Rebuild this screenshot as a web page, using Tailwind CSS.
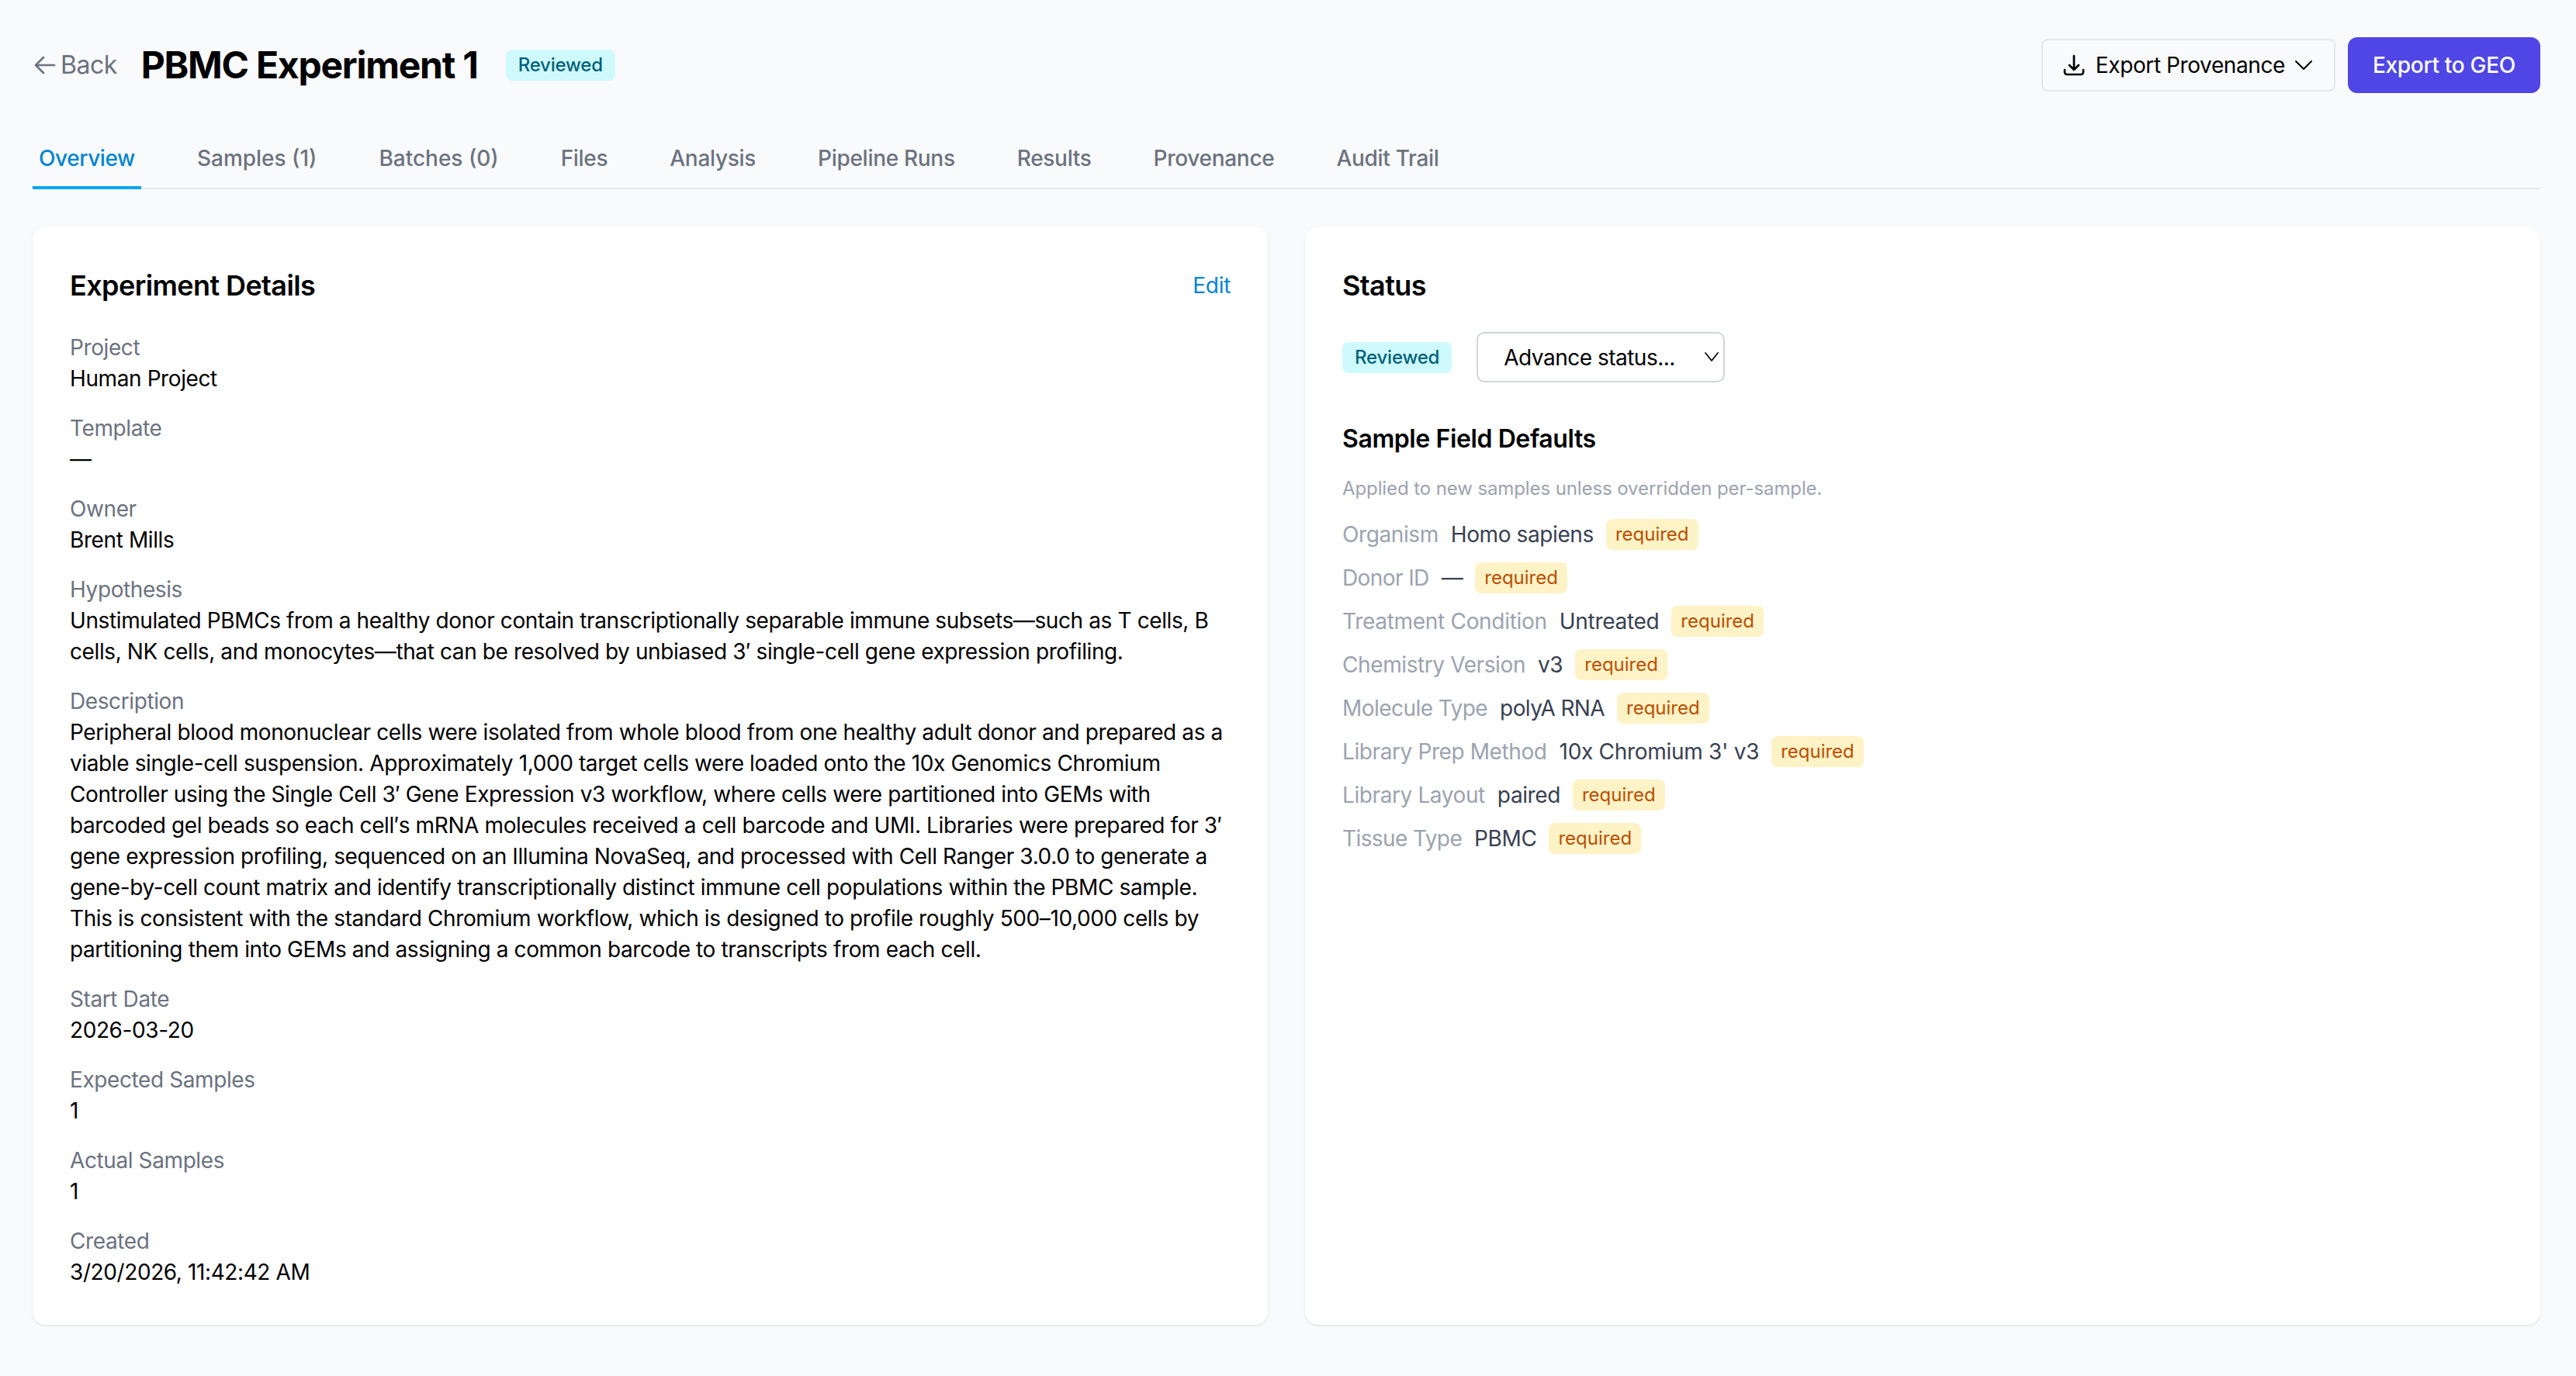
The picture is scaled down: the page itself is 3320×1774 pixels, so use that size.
<!DOCTYPE html>
<html lang="en">
<head>
  <meta charset="UTF-8" />
  <title>PBMC Experiment 1</title>
  <script src="https://cdn.jsdelivr.net/npm/@tailwindcss/browser@4"></script>
</head>
<body class="bg-[#f9fafb] min-h-screen font-['Inter',sans-serif] text-black text-[28px] leading-[40px] tracking-[-0.4px]">
  <div class="w-[3232px] ml-[42px]">
    <!-- Header -->
    <div class="flex items-center justify-between pt-[48px] h-[120px]">
      <div class="flex items-center">
        <a class="flex items-center gap-[4px] text-[32px] tracking-[-0.5px] text-[#6b7280]">
          <svg class="w-[32px] h-[32px]" fill="none" viewBox="0 0 24 24" stroke="currentColor" stroke-width="2" stroke-linecap="round" stroke-linejoin="round"><path d="M10.5 19.5 3 12m0 0 7.5-7.5M3 12h18" /></svg>
          Back
        </a>
        <h1 class="ml-[31px] text-[48px] leading-[64px] font-bold tracking-[-1.25px]">PBMC Experiment 1</h1>
        <span class="ml-[36px] bg-cyan-100 text-cyan-800 text-[24px] leading-[32px] tracking-[-0.2px] font-medium px-[16px] py-[4px] rounded-[8px]">Reviewed</span>
      </div>
      <div class="flex items-center gap-[16px]">
        <button class="flex items-center h-[68px] pl-[24px] pr-[23px] border-2 border-[#e5e7eb] rounded-[8px]">
          <svg class="w-[32px] h-[32px] mr-[12px]" fill="none" viewBox="0 0 24 24" stroke="currentColor" stroke-width="2" stroke-linecap="round" stroke-linejoin="round"><path d="M3 16.5v2.25A2.25 2.25 0 0 0 5.25 21h13.5A2.25 2.25 0 0 0 21 18.75V16.5M16.5 12 12 16.5m0 0L7.5 12m4.5 4.5V3" /></svg>
          Export Provenance
          <svg class="w-[32px] h-[32px] ml-[8px]" fill="none" viewBox="0 0 24 24" stroke="currentColor" stroke-width="1.5" stroke-linecap="round" stroke-linejoin="round"><path d="m19.5 8.25-7.5 7.5-7.5-7.5" /></svg>
        </button>
        <button class="h-[72px] px-[32px] bg-[#4f46e5] text-white font-medium tracking-[-0.3px] rounded-[12px]">Export to GEO</button>
      </div>
    </div>

    <!-- Tabs -->
    <div class="mt-[42px] flex gap-[64px] border-b-2 border-[#e5e7eb] h-[82px] text-[#6b7280] font-medium tracking-[-0.3px]">
      <a class="px-[8px] pt-[22px] h-[82px] border-b-4 border-sky-500 text-sky-600 tracking-[-0.4px]">Overview</a>
      <a class="px-[8px] pt-[22px] tracking-normal">Samples (1)</a>
      <a class="px-[8px] pt-[22px] tracking-normal">Batches (0)</a>
      <a class="px-[8px] pt-[22px]">Files</a>
      <a class="px-[8px] pt-[22px]">Analysis</a>
      <a class="px-[8px] pt-[22px]">Pipeline Runs</a>
      <a class="px-[8px] pt-[22px]">Results</a>
      <a class="px-[8px] pt-[22px]">Provenance</a>
      <a class="px-[8px] pt-[22px]">Audit Trail</a>
    </div>

    <div class="mt-[48px] grid grid-cols-2 gap-[48px]">
      <!-- Experiment details -->
      <div class="bg-white rounded-[16px] shadow-sm p-[48px] h-[1416px]">
        <div class="flex items-center justify-between h-[56px] mb-[32px]">
          <h2 class="text-[36px] leading-[56px] font-semibold tracking-[-0.6px]">Experiment Details</h2>
          <a class="text-sky-600 tracking-[-0.3px]">Edit</a>
        </div>
        <div class="flex flex-col gap-[24px]">
          <div><div class="text-[#6b7280]">Project</div><div>Human Project</div></div>
          <div><div class="text-[#6b7280]">Template</div><div>—</div></div>
          <div><div class="text-[#6b7280]">Owner</div><div>Brent Mills</div></div>
          <div>
            <div class="text-[#6b7280]">Hypothesis</div>
            <p class="tracking-[-0.39px]">Unstimulated PBMCs from a healthy donor contain transcriptionally separable immune subsets—such as T cells, B cells, NK cells, and monocytes—that can be resolved by unbiased 3′ single-cell gene expression profiling.</p>
          </div>
          <div>
            <div class="text-[#6b7280]">Description</div>
            <p class="tracking-[-0.39px]">Peripheral blood mononuclear cells were isolated from whole blood from one healthy adult donor and prepared as a viable single-cell suspension. Approximately 1,000 target cells were loaded onto the 10x Genomics Chromium Controller using the Single Cell 3′ Gene Expression v3 workflow, where cells were partitioned into GEMs with barcoded gel beads so each cell′s mRNA molecules received a cell barcode and UMI. Libraries were prepared for 3′ gene expression profiling, sequenced on an Illumina NovaSeq, and processed with Cell Ranger 3.0.0 to generate a gene-by-cell count matrix and identify transcriptionally distinct immune cell populations within the PBMC sample. This is consistent with the standard Chromium workflow, which is designed to profile roughly 500–10,000 cells by partitioning them into GEMs and assigning a common barcode to transcripts from each cell.</p>
          </div>
          <div><div class="text-[#6b7280]">Start Date</div><div>2026-03-20</div></div>
          <div><div class="text-[#6b7280]">Expected Samples</div><div>1</div></div>
          <div><div class="text-[#6b7280]">Actual Samples</div><div>1</div></div>
          <div><div class="text-[#6b7280]">Created</div><div>3/20/2026, 11:42:42 AM</div></div>
        </div>
      </div>

      <!-- Status -->
      <div class="bg-white rounded-[16px] shadow-sm p-[48px] h-[1416px]">
        <h2 class="text-[36px] leading-[56px] font-semibold tracking-[-0.6px]">Status</h2>
        <div class="mt-[32px] flex items-center gap-[32px] h-[65px]">
          <span class="bg-cyan-100 text-cyan-800 text-[24px] leading-[32px] tracking-[-0.2px] font-medium px-[16px] py-[4px] rounded-[8px]">Reviewed</span>
          <div class="relative">
            <select class="appearance-none w-[320px] h-[65px] pl-[33px] border-2 border-[#d1d5db] rounded-[10px] bg-white text-black tracking-[-0.5px]">
              <option>Advance status...</option>
            </select>
            <svg class="absolute right-[7px] top-[25px] w-[20px] h-[14px] pointer-events-none" fill="none" viewBox="0 0 20 14" stroke="currentColor" stroke-width="1.7" stroke-linecap="round" stroke-linejoin="round"><path d="M2 2l8 10 8-10" /></svg>
          </div>
        </div>
        <h3 class="mt-[49px] text-[32px] leading-[48px] font-semibold">Sample Field Defaults</h3>
        <p class="mt-[24px] text-[24px] leading-[32px] tracking-[-0.1px] text-[#9ca3af]">Applied to new samples unless overridden per-sample.</p>
        <div class="mt-[23px] flex flex-col gap-[16px]">
          <div class="flex items-center gap-[16px] h-[40px]"><span class="text-[#9ca3af]">Organism</span><span class="text-[#374151]">Homo sapiens</span><span class="bg-amber-100 text-amber-700 text-[24px] leading-[32px] tracking-normal px-[12px] py-[4px] rounded-[8px]">required</span></div>
          <div class="flex items-center gap-[16px] h-[40px]"><span class="text-[#9ca3af] tracking-[-0.6px]">Donor ID</span><span class="text-[#374151]">—</span><span class="bg-amber-100 text-amber-700 text-[24px] leading-[32px] tracking-normal px-[12px] py-[4px] rounded-[8px]">required</span></div>
          <div class="flex items-center gap-[16px] h-[40px]"><span class="text-[#9ca3af] tracking-[-0.3px]">Treatment Condition</span><span class="text-[#374151] tracking-[-0.3px]">Untreated</span><span class="bg-amber-100 text-amber-700 text-[24px] leading-[32px] tracking-normal px-[12px] py-[4px] rounded-[8px]">required</span></div>
          <div class="flex items-center gap-[16px] h-[40px]"><span class="text-[#9ca3af]">Chemistry Version</span><span class="text-[#374151]">v3</span><span class="bg-amber-100 text-amber-700 text-[24px] leading-[32px] tracking-normal px-[12px] py-[4px] rounded-[8px]">required</span></div>
          <div class="flex items-center gap-[16px] h-[40px]"><span class="text-[#9ca3af] tracking-[-0.55px]">Molecule Type</span><span class="text-[#374151] tracking-[-0.6px]">polyA RNA</span><span class="bg-amber-100 text-amber-700 text-[24px] leading-[32px] tracking-normal px-[12px] py-[4px] rounded-[8px]">required</span></div>
          <div class="flex items-center gap-[16px] h-[40px]"><span class="text-[#9ca3af]">Library Prep Method</span><span class="text-[#374151] tracking-[-0.3px]">10x Chromium 3' v3</span><span class="bg-amber-100 text-amber-700 text-[24px] leading-[32px] tracking-normal px-[12px] py-[4px] rounded-[8px]">required</span></div>
          <div class="flex items-center gap-[16px] h-[40px]"><span class="text-[#9ca3af]">Library Layout</span><span class="text-[#374151]">paired</span><span class="bg-amber-100 text-amber-700 text-[24px] leading-[32px] tracking-normal px-[12px] py-[4px] rounded-[8px]">required</span></div>
          <div class="flex items-center gap-[16px] h-[40px]"><span class="text-[#9ca3af] tracking-[-0.6px]">Tissue Type</span><span class="text-[#374151]">PBMC</span><span class="bg-amber-100 text-amber-700 text-[24px] leading-[32px] tracking-normal px-[12px] py-[4px] rounded-[8px]">required</span></div>
        </div>
      </div>
    </div>
  </div>
</body>
</html>
